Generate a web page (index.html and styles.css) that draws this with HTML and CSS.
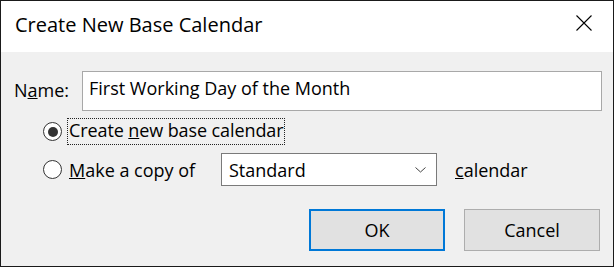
FILE: index.html
```html
<!DOCTYPE html>
<html lang="en">
<head>
    <meta charset="UTF-8">
    <title>Create New Base Calendar</title>
    <link rel="stylesheet" href="styles.css">
</head>
<body>
    <div class="dialog">
        <div class="titlebar">
            <span class="title">Create New Base Calendar</span>
            <svg class="close" width="16" height="16" viewBox="0 0 16 16">
                <path d="M0.5 0.5 L15.5 15.5 M15.5 0.5 L0.5 15.5" stroke="#000" stroke-width="1.1" fill="none"/>
            </svg>
        </div>
        <div class="content">
            <div class="name-row">
                <label class="name-label">N<u>a</u>me:</label>
                <div class="text-input">First Working Day of the Month</div>
            </div>
            <div class="radio-row first">
                <span class="radio checked"></span>
                <span class="focus">Create <u>n</u>ew base calendar</span>
            </div>
            <div class="radio-row second">
                <span class="radio"></span>
                <span class="radio-text"><u>M</u>ake a copy of</span>
                <div class="select">
                    <span>Standard</span>
                    <svg width="11" height="6" viewBox="0 0 11 6">
                        <path d="M0.5 0.5 L5.5 5 L10.5 0.5" stroke="#444" stroke-width="1" fill="none"/>
                    </svg>
                </div>
                <span class="after"><u>c</u>alendar</span>
            </div>
            <div class="buttons">
                <button class="btn default">OK</button>
                <button class="btn">Cancel</button>
            </div>
        </div>
    </div>
</body>
</html>
```

FILE: styles.css
```css
body {
    margin: 0;
    font-family: "Open Sans", "Noto Sans", sans-serif;
    color: #000;
}
.dialog {
    width: 614px;
    height: 267px;
    box-sizing: border-box;
    border: 1px solid #1a1a1a;
    display: flex;
    flex-direction: column;
    background-color: #f0f0f0;
}
.titlebar {
    height: 51px;
    background-color: #fff;
    display: flex;
    align-items: center;
    justify-content: space-between;
    padding: 0 21px 0 14px;
}
.title {
    font-size: 20px;
    margin-top: -4px;
}
.close {
    margin-top: -7px;
}
.content {
    flex: 1;
    padding: 19px 0 0 0;
    font-size: 18px;
}
.name-row {
    display: flex;
    align-items: center;
    height: 40px;
}
.name-label {
    width: 68px;
    padding-left: 13px;
    box-sizing: border-box;
    margin-right: 13px;
    margin-top: -3px;
}
.text-input {
    width: 520px;
    height: 40px;
    box-sizing: border-box;
    border: 1px solid #a8a8a8;
    background-color: #fff;
    padding-left: 6px;
    line-height: 33px;
}
.radio-row {
    display: flex;
    align-items: center;
    padding-left: 42px;
}
.radio-row.first {
    margin-top: 7px;
    height: 27px;
}
.radio-row.second {
    margin-top: 8px;
    height: 33px;
}
.radio {
    width: 19px;
    height: 19px;
    box-sizing: border-box;
    border: 1px solid #333;
    border-radius: 50%;
    background-color: #fff;
    display: flex;
    align-items: center;
    justify-content: center;
    margin-right: 5px;
}
.radio.checked::after {
    content: "";
    width: 10px;
    height: 10px;
    border-radius: 50%;
    background-color: #333;
}
.focus {
    border: 1px dotted #222;
    height: 27px;
    box-sizing: border-box;
    line-height: 23px;
    padding: 0 1px;
    letter-spacing: -0.1px;
}
.radio-text {
    padding-left: 2px;
    width: 152px;
}
.select {
    width: 216px;
    height: 33px;
    box-sizing: border-box;
    border: 1px solid #7a7a7a;
    background-color: #fff;
    display: flex;
    align-items: center;
    justify-content: space-between;
    padding: 0 10px 0 7px;
}
.after {
    margin-left: 18px;
}
.buttons {
    display: flex;
    justify-content: flex-end;
    gap: 19px;
    margin-top: 23px;
    padding-right: 13px;
}
.btn {
    width: 136px;
    height: 42px;
    background-color: #e1e1e1;
    border: 1px solid #adadad;
    font-family: inherit;
    font-size: 18px;
    color: #000;
    padding: 0;
}
.btn.default {
    border: 2px solid #0078d7;
}
```
